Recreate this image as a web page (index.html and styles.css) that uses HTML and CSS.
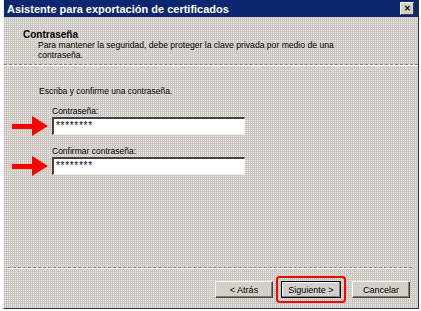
FILE: index.html
```html
<!DOCTYPE html>
<html lang="es">
<head>
  <meta charset="UTF-8" />
  <title>Asistente para exportación de certificados</title>
  <link rel="stylesheet" href="styles.css">
</head>
<body>
  <div class="ventana">
    <!-- Barra de titulo -->
    <div class="titulo">
      <span class="titulo-texto">Asistente para exportación de certificados</span>
      <span class="cerrar">✕</span>
    </div>

    <!-- Encabezado del paso -->
    <div class="encabezado">
      <div class="paso">Contraseña</div>
      <div class="descripcion">Para mantener la seguridad, debe proteger la clave privada por medio de una<br>contraseña.</div>
    </div>
    <div class="separador"></div>

    <div class="cuerpo">
      <p class="indicacion">Escriba y confirme una contraseña.</p>

      <label class="etiqueta" for="clave">Contraseña:</label>
      <div class="fila">
        <svg class="flecha" width="36" height="20" viewBox="0 0 36 20">
          <polygon points="0,8 20,8 20,0 36,10 20,20 20,13 0,13" fill="#f00"/>
        </svg>
        <div class="campo" id="clave">********</div>
      </div>

      <label class="etiqueta" for="confirmar">Confirmar contraseña:</label>
      <div class="fila">
        <svg class="flecha" width="36" height="20" viewBox="0 0 36 20">
          <polygon points="0,8 20,8 20,0 36,10 20,20 20,13 0,13" fill="#f00"/>
        </svg>
        <div class="campo" id="confirmar">********</div>
      </div>
    </div>

    <div class="separador inferior"></div>
    <div class="botones">
      <button class="boton">&lt; Atrás</button>
      <span class="marca"><button class="boton">Siguiente &gt;</button></span>
      <button class="boton">Cancelar</button>
    </div>
  </div>
</body>
</html>
```

FILE: styles.css
```css
body {
  margin: 0;
  background: #fff;
  font-family: "Liberation Sans", Arial, sans-serif;
  font-size: 8.5px;
  color: #000;
}

.ventana {
  margin-left: 3px;
  width: 416px;
  height: 309px;
  box-sizing: border-box;
  background-color: #cbc7c2;
  background-image: conic-gradient(#eeeae2 0 25%, transparent 0 100%);
  background-size: 2px 2px;
  border-left: 1px solid #f4f0e8;
  border-right: 1px solid #303030;
  border-bottom: 1px solid #303030;
  display: flex;
  flex-direction: column;
}

.titulo {
  height: 17px;
  background: #0c2670;
  color: #fff;
  display: flex;
  align-items: center;
  justify-content: space-between;
  padding: 0 4px 0 3px;
}

.titulo-texto {
  font-weight: bold;
  font-size: 11px;
}

.cerrar {
  width: 12px;
  height: 11px;
  background: #d4d0c8;
  color: #000;
  font-size: 8px;
  font-weight: bold;
  line-height: 11px;
  text-align: center;
  border-top: 1px solid #fff;
  border-left: 1px solid #fff;
  border-right: 1px solid #404040;
  border-bottom: 1px solid #404040;
}

.encabezado {
  padding: 12px 0 0 19px;
  line-height: 10px;
}

.paso {
  font-weight: bold;
  font-size: 10px;
  line-height: 11px;
}

.descripcion {
  padding-left: 15px;
  white-space: nowrap;
  font-size: 8.6px;
}

.separador {
  margin-top: 4px;
  height: 0;
  border-top: 1px dashed #808080;
  border-bottom: 1px solid #fff;
}

.cuerpo {
  flex: 1;
  padding-left: 35px;
}

.indicacion {
  margin: 20px 0 0;
  line-height: 10px;
}

.etiqueta {
  display: block;
  margin: 10px 0 0 13px;
  line-height: 10px;
}

.fila {
  display: flex;
  align-items: center;
  margin-left: -27px;
  gap: 4px;
}

.campo {
  width: 193px;
  height: 18px;
  box-sizing: border-box;
  background: #fff;
  border-top: 2px solid #404040;
  border-left: 2px solid #404040;
  border-right: 1px solid #f4f0e8;
  border-bottom: 1px solid #f4f0e8;
  padding: 1px 0 0 2px;
  font-size: 10px;
  letter-spacing: 0.7px;
  line-height: 11px;
}

.separador.inferior {
  margin: 0 6px 2px 4px;
}

.botones {
  display: flex;
  align-items: center;
  justify-content: flex-end;
  gap: 2px;
  height: 37px;
  padding-right: 8px;
}

.boton {
  width: 58px;
  height: 17px;
  padding: 0;
  font-family: "Liberation Sans", Arial, sans-serif;
  font-size: 9px;
  background: #d4d0c8;
  border-top: 1px solid #fff;
  border-left: 1px solid #fff;
  border-right: 1px solid #404040;
  border-bottom: 1px solid #404040;
  box-shadow: inset -1px -1px 0 #808080;
}

.marca {
  border: 2px solid #f00;
  border-radius: 4px;
  padding: 3px;
  margin: 0 4px 0 1px;
}

.marca .boton {
  display: block;
  width: 60px;
  border: 1px solid #000;
  box-shadow: inset -1px -1px 0 #808080, inset 1px 1px 0 #fff;
}
```
